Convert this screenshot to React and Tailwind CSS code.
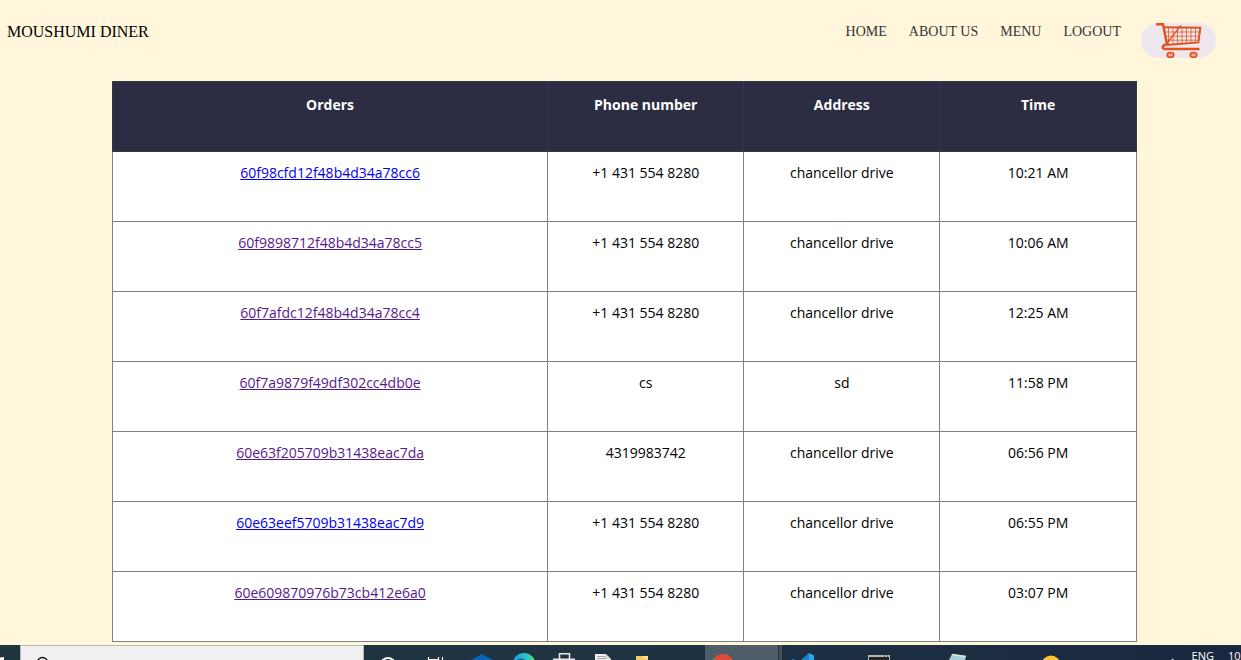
import React from "react";

const orders = [
  { id: "60f98cfd12f48b4d34a78cc6", phone: "+1 431 554 8280", address: "chancellor drive", time: "10:21 AM", visited: false },
  { id: "60f9898712f48b4d34a78cc5", phone: "+1 431 554 8280", address: "chancellor drive", time: "10:06 AM", visited: true },
  { id: "60f7afdc12f48b4d34a78cc4", phone: "+1 431 554 8280", address: "chancellor drive", time: "12:25 AM", visited: true },
  { id: "60f7a9879f49df302cc4db0e", phone: "cs", address: "sd", time: "11:58 PM", visited: true },
  { id: "60e63f205709b31438eac7da", phone: "4319983742", address: "chancellor drive", time: "06:56 PM", visited: true },
  { id: "60e63eef5709b31438eac7d9", phone: "+1 431 554 8280", address: "chancellor drive", time: "06:55 PM", visited: false },
  { id: "60e609870976b73cb412e6a0", phone: "+1 431 554 8280", address: "chancellor drive", time: "03:07 PM", visited: true },
];

const links = ["Home", "About us", "Menu", "Logout"];

function CartIcon() {
  return (
    <svg viewBox="0 0 75 35" className="h-[35px] w-[75px]" fill="none" stroke="#e2521d" aria-hidden="true">
      <path d="M15 1.2H22L26 21.5" strokeWidth="2.4" />
      <path d="M22.5 4.2L59.3 4.8L57.4 19.4L25.5 22" strokeWidth="2" />
      <path d="M24 9H58.5M24.8 13.2H58M25.5 17.2H57.5" strokeWidth="1" opacity="0.75" />
      <path d="M27.5 5V21M32 5V21M36.5 5V21M41 5V20.5M45.5 5V20M50 5V20M54.5 5V19.5" strokeWidth="1" opacity="0.75" />
      <path d="M39.8 2.3L26 20.5" strokeWidth="1.4" />
      <path d="M25.5 21.5C20.5 22.5 20.5 26 24.5 26H58.5" strokeWidth="2.4" />
      <ellipse cx="29.5" cy="32" rx="3.2" ry="2.3" strokeWidth="1.8" fill="#efc5b8" />
      <ellipse cx="52.5" cy="32" rx="3.2" ry="2.3" strokeWidth="1.8" fill="#efc5b8" />
      <path d="M29 32H30M52 32H53" strokeWidth="1.2" />
    </svg>
  );
}

function Header() {
  return (
    <header className="flex h-[81px] shrink-0 items-start justify-between pl-[7px] pr-[25px] font-['Liberation_Serif',serif]">
      <a href="#home" className="mt-5 text-base leading-6 text-black">MOUSHUMI DINER</a>
      <div className="flex items-start gap-5">
        <nav className="mt-5 flex gap-[22px]">
          {links.map((label) => (
            <a key={label} href="#nav" className="text-sm leading-6 text-[#333] uppercase">{label}</a>
          ))}
        </nav>
        <button type="button" aria-label="Cart" className="mt-[23px] overflow-hidden rounded-full bg-[#eee7ee]">
          <CartIcon />
        </button>
      </div>
    </header>
  );
}

function OrdersTable() {
  const head = "h-[70px] border border-[#343a40] pt-[11px] align-top text-sm leading-6 font-bold";
  const cell = "h-[70px] border border-[#808080] pt-[9px] align-top";
  return (
    <table className="w-full table-fixed border-collapse bg-white text-center font-['Open_Sans',sans-serif] text-sm leading-6 text-black">
      <colgroup>
        <col className="w-[42.5%]" />
        <col className="w-[19.15%]" />
        <col className="w-[19.15%]" />
        <col />
      </colgroup>
      <thead className="bg-[#2c2d42] text-white">
        <tr>
          <th scope="col" className={head}>Orders</th>
          <th scope="col" className={head}>Phone number</th>
          <th scope="col" className={head}>Address</th>
          <th scope="col" className={head}>Time</th>
        </tr>
      </thead>
      <tbody>
        {orders.map((o) => (
          <tr key={o.id}>
            <td className={cell}>
              <a href="#order" className={o.visited ? "text-[#551a8b] underline" : "text-[#0000ee] underline"}>{o.id}</a>
            </td>
            <td className={cell}>{o.phone}</td>
            <td className={cell}>{o.address}</td>
            <td className={cell}>{o.time}</td>
          </tr>
        ))}
      </tbody>
    </table>
  );
}

function TaskButton({ label, className, children }) {
  return (
    <button type="button" aria-label={label} className={"flex h-[15px] shrink-0 justify-center " + className}>
      <svg viewBox="0 0 24 15" className="h-[15px] w-6" fill="none" aria-hidden="true">{children}</svg>
    </button>
  );
}

function Taskbar() {
  return (
    <footer className="flex h-[15px] shrink-0 overflow-hidden bg-linear-to-r from-[#20363f] via-[#1f3343] to-[#1a2740]">
      <button type="button" aria-label="Start" className="w-5 shrink-0">
        <svg viewBox="0 0 20 15" className="h-[15px] w-5" aria-hidden="true">
          <path d="M0 12.5L4 12V15H0Z" fill="#fff" />
        </svg>
      </button>
      <label className="flex w-[344px] shrink-0 border border-b-0 border-[#b8b8b8] bg-[#f1f1f1] pl-3">
        <svg viewBox="0 0 20 14" className="h-[14px] w-5" fill="none" aria-hidden="true">
          <circle cx="9.5" cy="16.5" r="5" stroke="#111" strokeWidth="1.4" />
        </svg>
        <input type="search" aria-label="Search" className="min-w-0 flex-1 bg-transparent outline-none" />
      </label>
      <TaskButton label="Cortana" className="w-12">
        <circle cx="12" cy="20" r="7" stroke="#f2f2f2" strokeWidth="2.2" />
      </TaskButton>
      <TaskButton label="Task view" className="w-[47px]">
        <path d="M4.5 12V15M4.5 14.5H14.5M14.5 12V15M18.5 12V15" stroke="#f2f2f2" strokeWidth="1.2" />
      </TaskButton>
      <TaskButton label="Mail" className="w-[45px]">
        <path d="M1 15L12 9L23 15Z" fill="#0864b8" />
      </TaskButton>
      <TaskButton label="Browser" className="w-10">
        <defs>
          <linearGradient id="edge" x1="0" x2="1">
            <stop offset="0" stopColor="#159bd8" />
            <stop offset="0.6" stopColor="#2cc4cf" />
            <stop offset="1" stopColor="#5cdc72" />
          </linearGradient>
        </defs>
        <circle cx="12" cy="19.5" r="11.5" fill="url(#edge)" />
        <path d="M5 15C7 13 11 13 13 15Z" fill="#17608f" />
      </TaskButton>
      <TaskButton label="Store" className="w-10">
        <path d="M7.5 14V8.8H17.5V14M1 14.2H23" stroke="#e8e8e8" strokeWidth="1.6" />
      </TaskButton>
      <TaskButton label="Document" className="w-10">
        <path d="M3 9H14L19 14V15H3Z" fill="#eeeeee" />
        <path d="M5 11.5H13M5 13.5H14" stroke="#a7a7a7" />
        <path d="M14 9V13H18" stroke="#b9b9b9" />
      </TaskButton>
      <TaskButton label="Files" className="w-9">
        <path d="M6 11H18V15H6Z" fill="#f0cc68" />
        <path d="M12 11H18V14H15Z" fill="#ffe08a" />
      </TaskButton>
      <div className="flex-41" />
      <button type="button" aria-label="Chrome" className="w-[73px] shrink-0 bg-[#4e5d67] pl-1.5">
        <svg viewBox="0 0 24 15" className="h-[15px] w-6" aria-hidden="true">
          <circle cx="12" cy="20" r="11" fill="#de4b3d" />
          <path d="M1 15L3 13L4 15Z" fill="#43a052" />
        </svg>
      </button>
      <div className="w-1 shrink-0 border-l border-[#26343e] bg-[#41505b]" />
      <TaskButton label="Code editor" className="w-11">
        <path d="M0 14L4 15H0Z" fill="#1d8cd8" />
        <path d="M9 15L17 8V15Z" fill="#1583cd" />
        <path d="M17 8L22 10.5V15H17Z" fill="#2ba5ee" />
      </TaskButton>
      <div className="flex-30" />
      <TaskButton label="Terminal" className="w-10">
        <path d="M1 10H23V15H1Z" fill="#b5b5b5" />
        <path d="M2 12H22V15H2Z" fill="#242424" />
        <path d="M17 11H18M20 11H21" stroke="#333" />
      </TaskButton>
      <div className="flex-36" />
      <TaskButton label="Notepad" className="w-10">
        <path d="M6 9L20 11L19 15H3Z" fill="#a9cfda" />
        <path d="M6 9.5L20 11.5" stroke="#e2e2d5" strokeWidth="1.5" />
      </TaskButton>
      <div className="flex-48" />
      <TaskButton label="Notes" className="w-10">
        <circle cx="12" cy="20" r="9.5" fill="#f8c431" />
      </TaskButton>
      <div className="flex w-[170px] shrink-0 justify-end gap-[14px] overflow-hidden pt-[3px] font-['Open_Sans',sans-serif] text-[11px] leading-4 whitespace-nowrap text-white">
        <svg viewBox="0 0 10 12" className="h-3 w-[10px]" aria-hidden="true">
          <path d="M3 12L5 10.5L6 12Z" fill="#ddd" />
        </svg>
        <span>ENG</span>
        <span className="w-[13px] overflow-hidden">10:</span>
      </div>
    </footer>
  );
}

export default function App() {
  return (
    <div className="flex min-h-screen flex-col bg-[#fff6dc]">
      <Header />
      <main className="flex-1 pr-[104px] pl-28">
        <OrdersTable />
      </main>
      <Taskbar />
    </div>
  );
}
